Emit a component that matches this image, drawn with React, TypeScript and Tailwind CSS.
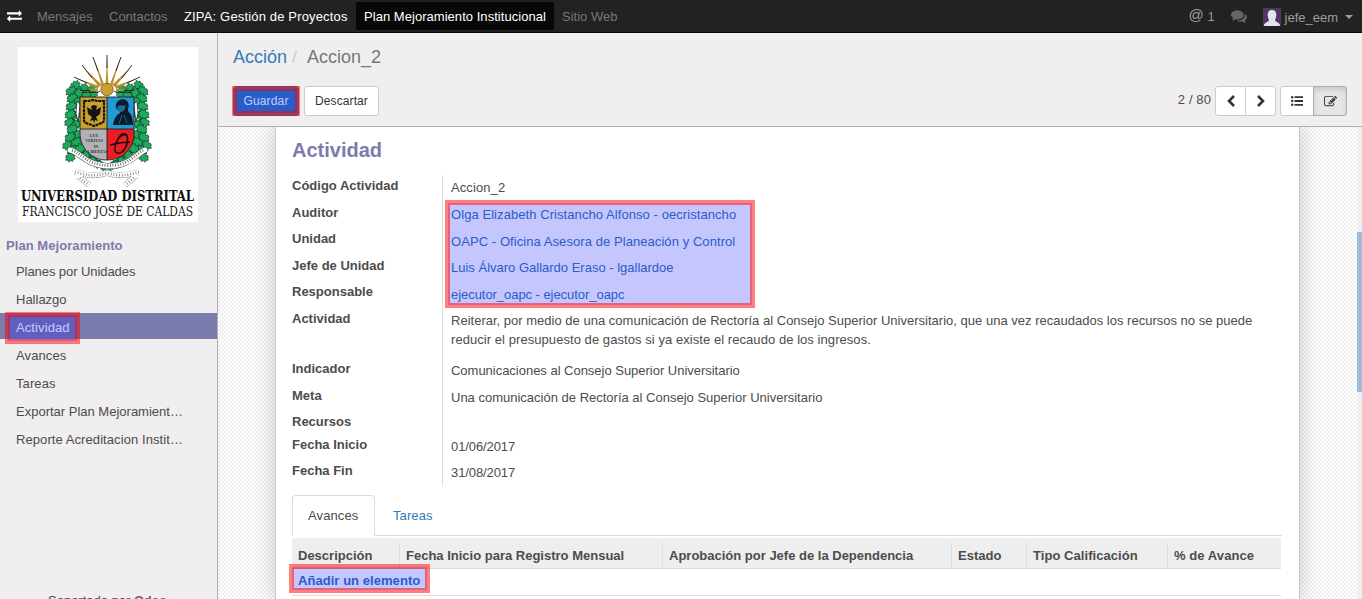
import React from "react";

function Highlight({ box }: { box: string }) {
  return (
    <span className={`pointer-events-none absolute z-10 flex border-[3px] border-[#ff0000]/50 ${box}`}>
      <span className="flex-1 border-2 border-[#ff0000]/50 bg-[#0000ff]/[0.225]" />
    </span>
  );
}

function Fa({ d, className }: { d: string; className: string }) {
  return (
    <svg viewBox="0 0 1792 1792" className={className} fill="currentColor">
      <path d={d} />
    </svg>
  );
}

const EXCHANGE =
  "M1792 1184v192q0 13-9.5 22.5t-22.5 9.5h-1376v192q0 13-9.5 22.5t-22.5 9.5q-12 0-24-10l-319-320q-9-9-9-22 0-14 9-23l320-320q9-9 23-9 13 0 22.5 9.5t9.5 22.5v192h1376q13 0 22.5 9.5t9.5 22.5zm0-544q0 14-9 23l-320 320q-9 9-23 9-13 0-22.5-9.5t-9.5-22.5v-192h-1376q-13 0-22.5-9.5t-9.5-22.5v-192q0-13 9.5-22.5t22.5-9.5h1376v-192q0-14 9-23t23-9q12 0 24 10l319 319q9 9 9 23z";
const COMMENTS =
  "M1408 768q0 139-94 257t-256.5 186.5-353.5 68.5q-86 0-176-16-124 88-278 128-36 9-86 16h-3q-11 0-20.5-8t-11.5-21q-1-3-1-6.5t.5-6.5 2-6l2.5-5 3.5-5.5 4-5 4.5-5 4-4.5q5-6 23-25t26-29.5 22.5-29 25-38.5 20.5-44q-124-72-195-177t-71-224q0-139 94-257t256.5-186.5 353.5-68.5 353.5 68.5 256.5 186.5 94 257zm384 256q0 120-71 224.5t-195 176.5q10 24 20.5 44t25 38.5 22.5 29 26 29.5 23 25q1 1 4 4.5t4.5 5 4 5 3.5 5.5l2.5 5 2 6 .5 6.5-1 6.5q-3 14-13 22t-22 7q-50-7-86-16-154-40-278-128-90 16-176 16-271 0-472-132 58 4 88 4 161 0 309-45t264-129q125-92 192-212t67-254q0-77-23-152 129 71 204 178t75 230z";
const EDIT =
  "M888 1184l116-116-152-152-116 116v56h96v96h56zm440-720q-16-16-33 1l-350 350q-17 17-1 33t33-1l350-350q17-17 1-33zm80 594v190q0 119-84.5 203.5t-203.5 84.5h-832q-119 0-203.5-84.5t-84.5-203.5v-832q0-119 84.5-203.5t203.5-84.5h832q63 0 117 25 15 7 18 23 3 17-9 29l-49 49q-14 14-32 8-23-6-45-6h-832q-66 0-113 47t-47 113v832q0 66 47 113t113 47h832q66 0 113-47t47-113v-126q0-13 9-22l64-64q15-15 35-7t20 29zm-96-738l288 288-672 672h-288v-288zm444 132l-92 92-288-288 92-92q28-28 68-28t68 28l152 152q28 28 28 68t-28 68z";

const leaves: [number, number, number][] = [
  [57, 38, 4], [65, 41, 4], [73, 42, 3.5], [53, 44, 4.5], [60, 46, 4.5], [68, 47, 4], [76, 47, 3], [54, 51, 4.5],
  [59, 54, 3.5], [53, 59, 4.5], [57, 68, 4], [52, 67, 4.5], [51, 75, 4], [58, 77, 4], [54, 82, 4.5], [60, 87, 4],
  [52, 90, 4.5], [58, 95, 4.5], [49, 98, 4], [54, 103, 4.5], [62, 101, 4.5], [52, 110, 4], [67, 108, 4], [74, 113, 3.5],
  [80, 117, 3.5], [86, 120, 3],
];

function Leaf() {
  return <path d="M-1.100 0l.3-.5.4.1.1-.6.5.2.5-.4.1.6.5.1-.3.5.3.5-.6.1 0 .5-.5-.2-.5.4-.2-.5-.6 0 .2-.4z" />;
}

function Logo() {
  return (
    <svg viewBox="0 0 180 175" className="h-[175px] w-[180px] overflow-visible">
      <path d="M0 0h180v175H0z" fill="#ffffff" />
      <g fill="none" stroke="#17804a" strokeWidth="4">
        <path d="M57 42c-5 10-3 24-2 34s-4 20 6 27l25 15" />
        <path d="M121 42c5 10 3 24 2 34s4 20-6 27l-25 15" />
      </g>
      <g fill="#1cab5b" stroke="#10382a" strokeWidth="0.160">
        {leaves.map(([x, y, r], i) => (
          <g key={i}>
            <g transform={`translate(${x} ${y}) scale(${r})`}>
              <Leaf />
            </g>
            <g transform={`translate(${178 - x} ${y}) scale(${-r} ${r})`}>
              <Leaf />
            </g>
          </g>
        ))}
      </g>
      <g fill="#ffffff" stroke="#222222" strokeWidth="0.8">
        <path d="M59 54l3 3-1 11-1 7-2-9z" />
        <path d="M119 54l-3 3 1 11 1 7 2-9z" />
      </g>
      <path d="M64 46c8-2 14 1 18-2M114 46c-8-2-14 1-18-2" stroke="#222222" strokeWidth="1" fill="none" />
      <g fill="#b8922c">
        <path d="M87.600 38L89 10l1.400 28zM83.500 38L76 12l10 25zM94.500 38L102 12 92 37zM81 40L65 20l19 18zM97 40l16-20-19 18zM80 42L58 31l23 8zM98 42l22-11-23 8zM80 44l-17-.5 17-2zM98 44l17-.5-17-2z" />
      </g>
      <g stroke="#1b1b1b" strokeWidth="0.900">
        <path d="M89 21V8M80 24L75 10M98 24L103 10M74 31L64 18M104 31L114 18M69 36L56 30M109 36L122 30M72 43.500H62M106 43.500H116" />
      </g>
      <circle cx="89" cy="42.500" r="6.200" fill="#c9a12e" stroke="#6f5616" strokeWidth="0.8" />
      <path d="M62 50h27v32H62z" fill="#c9a12e" />
      <path d="M89 50h27v32H89z" fill="#1f9cd6" />
      <path d="M62 82h27v31c-16-1-27-12-27-26z" fill="#b3b1b8" />
      <path d="M116 82H89v31c16-1 27-12 27-26z" fill="#ec1c24" />
      <path d="M62 50h54v36c0 15-11 27-27 27S62 101 62 86zM62 82h54M89 50v63" fill="none" stroke="#1d1d1d" strokeWidth="0.9" />
      <path d="M66 54h5l4-1 4 1h7v19c0 3-3 3-5 4l-5 2-5-2c-3-1-5-1-5-4z" fill="none" stroke="#161310" strokeWidth="2.200" strokeDasharray="3 0.600" />
      <path d="M69 60l5 3-1-4 3-1 3 1-1 4 5-3-1 7-4 3 2 4-3-1-1 3-1-3-3 1 2-4-4-3z" fill="#161310" />
      <path d="M98 57c2-5 8-6 11-3 3 3 1 7 1 10 2 3 5 4 5 14H95c1-6 3-10 6-11l2-3c-4-1-6-3-5-7z" fill="#0c1a2c" />
      <path d="M99.500 59c0 3 0 6 4 6l3-2 1-5c-3 1-5 0-8 1z" fill="#1b6f9e" />
      <path d="M104 68l-3 9M106 68l3 8" stroke="#1f9cd6" strokeWidth="0.6" />
      <g fill="#333333" fontFamily="Liberation Serif, serif" fontWeight="700" fontSize="4" textAnchor="middle">
        <text x="76" y="90">LUX</text>
        <text x="76" y="95">VERITAS</text>
        <text x="78" y="100.500">IN</text>
        <text x="79.500" y="106">LIBERTAS</text>
      </g>
      <path d="M92 98c7-2 13-3 20-3M109 88c-6-3-12 7-12 14 0 5 5 6 9 1 4-5 5-15 1-16-3-1-6 2-7 5" fill="none" stroke="#16090a" strokeWidth="1.500" />
      <g fill="none" strokeLinecap="round">
        <path d="M52 103c10 2 15 15 37 16s29-12 38-16" stroke="#555555" strokeWidth="6" />
        <path d="M52 103c10 2 15 15 37 16s29-12 38-16" stroke="#ffffff" strokeWidth="4.900" />
        <path d="M54 103.500c9 2 14 14 35 15s28-11 36-15" stroke="#555555" strokeWidth="2.800" strokeDasharray="0.8 1.800" strokeLinecap="butt" />
        <path d="M57 125c10 3 20 5 32 1 12 4 22 2 32-1M60 129l11 9M118 129l-11 9" stroke="#8a8a8a" strokeWidth="5.800" strokeDasharray="1.500 0.600" strokeLinecap="butt" />
        <path d="M57 125c10 3 20 5 32 1 12 4 22 2 32-1M60 129l11 9M118 129l-11 9" stroke="#ffffff" strokeWidth="4.600" />
        <path d="M57 125c10 3 20 5 32 1 12 4 22 2 32-1M62 131l9 7M116 131l-9 7" stroke="#777777" strokeWidth="2.600" strokeDasharray="0.8 2" strokeLinecap="butt" />
      </g>
      <text x="3" y="154" textLength="173" lengthAdjust="spacingAndGlyphs" fontFamily="DejaVu Serif Condensed, DejaVu Serif, serif" fontWeight="700" fontSize="14" fill="#0d0d0d">
        UNIVERSIDAD DISTRITAL
      </text>
      <text x="4" y="169" textLength="171" lengthAdjust="spacingAndGlyphs" fontFamily="DejaVu Serif Condensed, DejaVu Serif, serif" fontSize="13.500" fill="#1a1a1a">
        FRANCISCO JOSÉ DE CALDAS
      </text>
    </svg>
  );
}

function TopBar() {
  return (
    <nav className="flex h-[33px] shrink-0 items-start border-b border-[#080808] bg-[#222222] text-[#9d9d9d]">
      <Fa d={EXCHANGE} className="mt-[8px] ml-[7px] size-[15px] text-white" />
      <div className="ml-[7px] flex pt-[2px] leading-[30px] whitespace-nowrap">
        <a className="w-[72px] pl-2 text-[#777777]">Mensajes</a>
        <a className="w-[75px] pl-2 text-[#777777]">Contactos</a>
        <a className="w-[180px] pl-2 tracking-[0.16px] text-white">ZIPA: Gestión de Proyectos</a>
        <a className="h-[28px] w-[198px] bg-[#080808] pl-2 tracking-[0.04px] text-white">Plan Mejoramiento Institucional</a>
        <a className="pl-2 text-[#777777]">Sitio Web</a>
      </div>
      <div className="ml-auto flex pr-[9px]">
        <span className="pt-px text-[15px] leading-[28px]">@</span>
        <span className="ml-[4px] pt-[2px] text-xs leading-[30px]">1</span>
        <Fa d={COMMENTS} className="mt-[8px] ml-4 size-[16px] text-[#666666]" />
        <svg viewBox="0 0 18 18" className="mt-[8px] ml-4 size-[18px]">
          <path d="M0 0h18v18H0z" fill="#523565" />
          <path d="M9 2c3 0 4.500 2 4.300 5-.2 2.500-.8 4-1.300 5 .5 2 4 2 5 5v1H1v-1c1-3 4.500-3 5-5-.5-1-1.100-2.500-1.300-5C4.500 4 6 2 9 2z" fill="#e3e3ee" />
        </svg>
        <span className="ml-1 pt-[3px] leading-[30px]">jefe_eem</span>
        <span className="mt-[15px] ml-[7px] h-0 border-x-4 border-t-4 border-x-transparent border-t-[#9d9d9d]" />
      </div>
    </nav>
  );
}

const menu: [string, string][] = [
  ["Planes por Unidades", "tracking-[-0.07px]"],
  ["Hallazgo", ""],
  ["Actividad", "tracking-[0.1px]"],
  ["Avances", "tracking-[0.1px]"],
  ["Tareas", "tracking-[0.1px]"],
  ["Exportar Plan Mejoramient…", ""],
  ["Reporte Acreditacion Instit…", "tracking-[0.08px]"],
];

function Sidebar() {
  return (
    <aside className="flex w-[218px] shrink-0 flex-col border-r border-[#afafb6] bg-[#f0eeee]">
      <div className="mt-[14px] ml-[18px]">
        <Logo />
      </div>
      <h2 className="mt-[14px] pl-[6px] font-bold leading-5 tracking-[0.06px] text-[#7c7bad]">Plan Mejoramiento</h2>
      <ul className="mt-px flex flex-col gap-[2px]">
        {menu.map(([m, tracking]) => (
          <li key={m} className={`h-[26px] pl-4 leading-[29px] ${tracking} ${m === "Actividad" ? "relative bg-[#7c7bad] text-white" : ""}`}>
            {m}
            {m === "Actividad" && <Highlight box="left-[5px] top-[-1px] h-8 w-[75px]" />}
          </li>
        ))}
      </ul>
      <div className="mt-auto mb-[-12px] h-5 pl-12 leading-5">
        Soportado por <b className="tracking-[-0.3px] text-[#a24689]">Odoo</b>
      </div>
    </aside>
  );
}

function ControlPanel() {
  return (
    <header className="flex h-[94px] shrink-0 justify-between border-b border-[#afafb6] bg-[#f0eeee] pr-[15px] pl-[15px]">
      <div>
        <h1 className="mt-[11px] flex text-lg leading-[26px]">
          <span className="text-[#337ab7]">Acción</span>
          <span className="ml-[5px] text-[#cccccc]">/</span>
          <span className="ml-[10px] text-[#777777]">Accion_2</span>
        </h1>
        <div className="mt-[16px] flex gap-[5px] text-xs leading-[28px]">
          <button className="relative h-[30px] w-[66px] rounded-[3px] border border-[#2e6da4] bg-[#337ab7] tracking-[0.15px] text-white">
            Guardar
            <Highlight box="left-[-2px] top-[-1px] h-[30px] w-[68px]" />
          </button>
          <button className="h-[30px] w-[75px] rounded-[3px] border border-[#cccccc] bg-white tracking-[0.1px] text-[#333333]">Descartar</button>
        </div>
      </div>
      <div className="mt-[53px] flex h-[30px] text-[#333333]">
        <span className="mr-[4px] leading-[28px] tracking-[0.1px] text-[#4c4c4c]">2 / 80</span>
        <button className="flex w-[31px] items-center justify-center rounded-l-[3px] border border-[#cccccc] bg-white">
          <svg viewBox="0 0 8 12" className="h-3 w-2" fill="none" stroke="currentColor" strokeWidth="2.600">
            <path d="M7 1L2 6l5 5" />
          </svg>
        </button>
        <button className="-ml-px flex w-[31px] items-center justify-center rounded-r-[3px] border border-[#cccccc] bg-white">
          <svg viewBox="0 0 8 12" className="h-3 w-2" fill="none" stroke="currentColor" strokeWidth="2.600">
            <path d="M1 1l5 5-5 5" />
          </svg>
        </button>
        <button className="ml-[4px] flex w-[34px] items-center justify-center rounded-l-[3px] border border-[#cccccc] bg-white">
          <svg viewBox="0 0 12 10" className="h-[10px] w-3" fill="currentColor">
            <circle cx="1.200" cy="1.200" r="1.200" />
            <circle cx="1.200" cy="5" r="1.200" />
            <circle cx="1.200" cy="8.800" r="1.200" />
            <path d="M3.500 0.300H12v1.800H3.500zM3.500 4.100H12v1.800H3.500zM3.500 7.900H12v1.800H3.500z" />
          </svg>
        </button>
        <button className="-ml-px flex w-[34px] items-center justify-center rounded-r-[3px] border border-[#adadad] bg-[#e6e6e6] shadow-[inset_0_3px_5px_rgba(0,0,0,0.125)]">
          <Fa d={EDIT} className="size-[13px]" />
        </button>
      </div>
    </header>
  );
}

type Field = { label: string; value?: React.ReactNode; tone?: string; height: string; mark?: boolean };

const fields: Field[] = [
  { label: "Código Actividad", value: "Accion_2", tone: "pt-[3px] tracking-[0.1px]", height: "h-[27px]" },
  { label: "Auditor", value: "Olga Elizabeth Cristancho Alfonso - oecristancho", tone: "relative pt-[3px] text-[#337ab7] tracking-[0.07px]", height: "h-[26px]", mark: true },
  { label: "Unidad", value: "OAPC - Oficina Asesora de Planeación y Control", tone: "pt-[4px] text-[#337ab7] tracking-[0.07px]", height: "h-[27px]" },
  { label: "Jefe de Unidad", value: "Luis Álvaro Gallardo Eraso - lgallardoe", tone: "pt-[3px] text-[#337ab7]", height: "h-[26px]" },
  { label: "Responsable", value: "ejecutor_oapc - ejecutor_oapc", tone: "pt-[4px] text-[#337ab7] tracking-[-0.05px]", height: "h-[27px]" },
  {
    label: "Actividad",
    value: (
      <>
        Reiterar, por medio de una comunicación de Rectoría al Consejo Superior Universitario, que una vez recaudados los recursos no se puede
        <br />
        <span className="tracking-[0.06px]">reducir el presupuesto de gastos si ya existe el recaudo de los ingresos.</span>
      </>
    ),
    tone: "pt-[3px] tracking-[0.01px]",
    height: "h-[50px]",
  },
  { label: "Indicador", value: "Comunicaciones al Consejo Superior Universitario", tone: "pt-[3px] tracking-[-0.02px]", height: "h-[27px]" },
  { label: "Meta", value: "Una comunicación de Rectoría al Consejo Superior Universitario", tone: "pt-[3px]", height: "h-[26px]" },
  { label: "Recursos", height: "h-[23px]" },
  { label: "Fecha Inicio", value: "01/06/2017", tone: "pt-[3px] tracking-[-0.1px]", height: "h-[26px]" },
  { label: "Fecha Fin", value: "31/08/2017", tone: "pt-[3px] tracking-[-0.1px]", height: "h-[26px]" },
];

const columns: [string, string][] = [
  ["Descripción", "w-[108px]"],
  ["Fecha Inicio para Registro Mensual", "w-[263px]"],
  ["Aprobación por Jefe de la Dependencia", "w-[289px]"],
  ["Estado", "w-[75px]"],
  ["Tipo Calificación", "w-[141px] tracking-[0.06px]"],
  ["% de Avance", "w-[113px] tracking-[0.08px]"],
];

function Sheet() {
  return (
    <section className="ml-[57px] w-[1025px] border-x border-[#c8c8d3] bg-white pl-4 shadow-[0_0_20px_rgba(0,0,0,0.2)]">
      <h2 className="pt-[10px] text-xl font-bold leading-[26px] text-[#7c7bad]">Actividad</h2>
      <div className="mt-[12px]">
        {fields.map((f) => (
          <div key={f.label} className={`flex ${f.height}`}>
            <div className="w-[151px] shrink-0 border-r border-[#dddddd] pt-[1px] font-bold leading-5">{f.label}</div>
            <div className={`pl-2 leading-[19px] whitespace-nowrap ${f.tone ?? ""}`}>
              {f.value}
              {f.mark && <Highlight box="left-[2px] top-[-2px] h-[108px] w-[310px]" />}
            </div>
          </div>
        ))}
      </div>
      <div className="mt-[9px] flex h-[41px] w-[990px] border-b border-[#dddddd]">
        <a className="h-[41px] w-[83px] rounded-t-[4px] border border-b-0 border-[#dddddd] bg-white pl-[15px] leading-[40px] tracking-[0.1px]">Avances</a>
        <a className="pl-[18px] leading-[42px] tracking-[0.1px] text-[#337ab7]">Tareas</a>
      </div>
      <div className="mt-[2px] flex h-[31px] w-[989px] items-end border-b border-[#dddddd] bg-[#eeeeee] font-bold">
        {columns.map(([name, w], i) => (
          <div key={name} className={`${w} h-[25px] shrink-0 pl-[6px] leading-[26px] ${i < 5 ? "border-r border-[#dfdfdf]" : ""}`}>
            {name}
          </div>
        ))}
      </div>
      <div className="relative h-[27px] w-[989px] border-b border-[#dddddd] pl-[6px] font-bold leading-[24px] tracking-[0.05px] text-[#337ab7]">
        Añadir un elemento
        <Highlight box="left-[-3px] top-[-5px] h-[29px] w-[141px]" />
      </div>
    </section>
  );
}

export default function App() {
  return (
    <div className="flex h-[599px] w-[1362px] flex-col overflow-hidden bg-white font-['Liberation_Sans',Arial,sans-serif] text-[13px] text-[#4c4c4c]">
      <TopBar />
      <div className="flex min-h-0 flex-1">
        <Sidebar />
        <main className="flex min-w-0 flex-1 flex-col">
          <ControlPanel />
          <div className="flex min-h-0 flex-1 overflow-hidden">
            <div className="flex flex-1 overflow-hidden bg-[repeating-conic-gradient(#eeeeee_0_25%,#ffffff_0_50%)] bg-[length:4px_4px]">
              <Sheet />
            </div>
            <div className="w-[5px] shrink-0 bg-[#f0eeee] pt-[105px]">
              <div className="h-40 rounded-[1px] bg-[#9fbbd6]" />
            </div>
          </div>
        </main>
      </div>
    </div>
  );
}
